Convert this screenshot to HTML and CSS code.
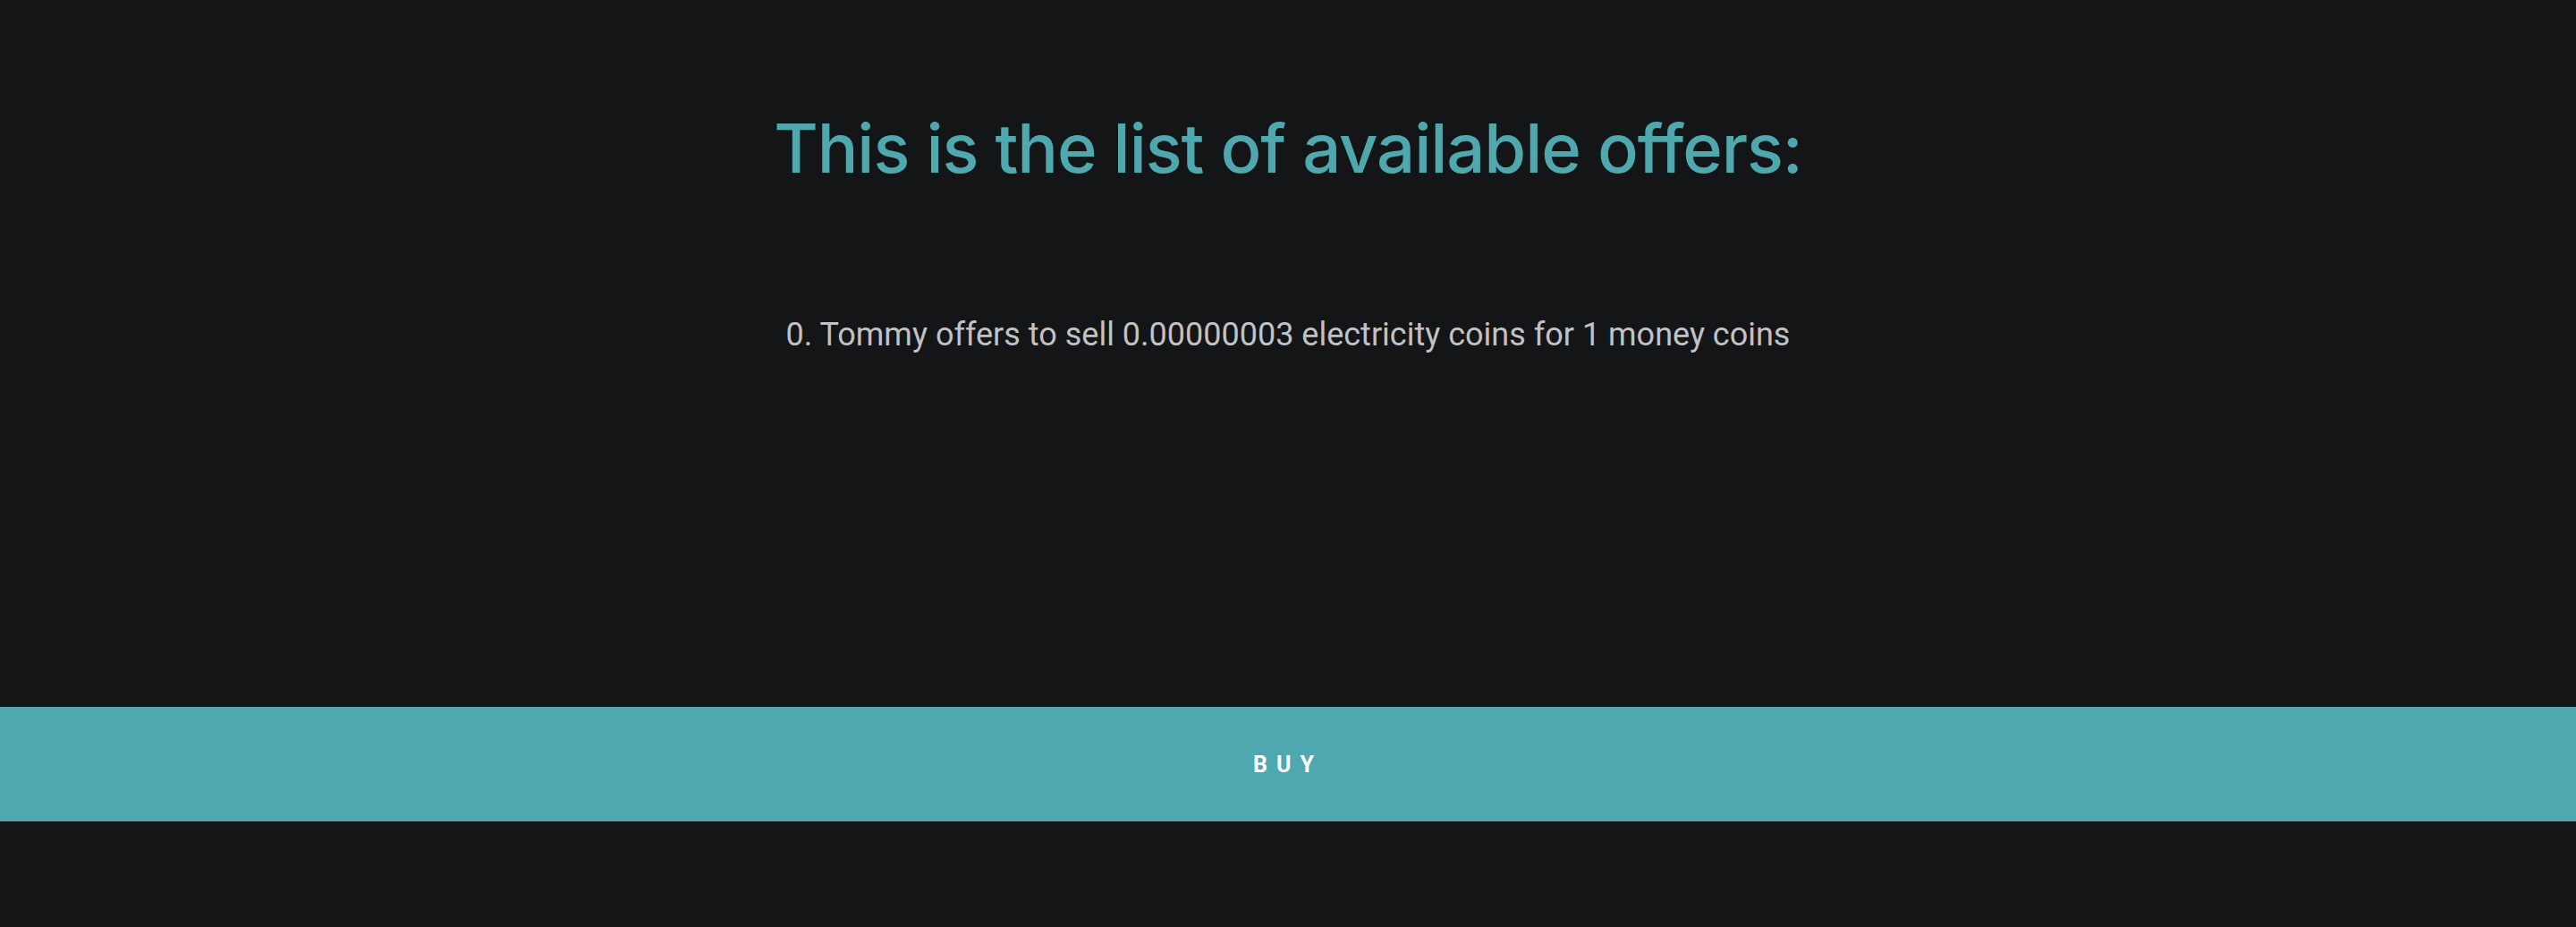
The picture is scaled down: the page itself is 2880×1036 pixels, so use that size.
FILE: index.html
```html
<!DOCTYPE html>
<html>
<head>
<meta charset="utf-8">
<link rel="stylesheet" href="styles.css">
</head>
<body>
<main class="page">
  <h1 class="title">This is the list of available offers:</h1>
  <ul class="offers">
    <li class="offer">0. Tommy offers to sell 0.00000003 electricity coins for 1 money coins</li>
  </ul>
  <button class="buy">BUY</button>
</main>
</body>
</html>
```
FILE: styles.css
```css
html, body {
  margin: 0;
  padding: 0;
  background: #141517;
}
.page {
  display: flex;
  flex-direction: column;
  align-items: center;
  padding-top: 120px;
}
.title {
  margin: 0;
  font-family: Inter, "Noto Sans", sans-serif;
  font-weight: 500;
  font-size: 76px;
  line-height: 1.2;
  color: #4fa8ae;
  letter-spacing: -1.1px;
}
.offers {
  list-style: none;
  margin: 135px 0 0;
  padding: 0;
}
.offer {
  font-family: Roboto, sans-serif;
  font-size: 36px;
  line-height: 56px;
  color: #c1c2c5;
}
.buy {
  margin-top: 388px;
  width: 100%;
  height: 128px;
  border: 0;
  background: #4fa8af;
  color: #ffffff;
  font-family: Roboto, sans-serif;
  font-weight: 700;
  font-size: 25px;
  letter-spacing: 10px;
  padding: 0;
  cursor: pointer;
}
```
